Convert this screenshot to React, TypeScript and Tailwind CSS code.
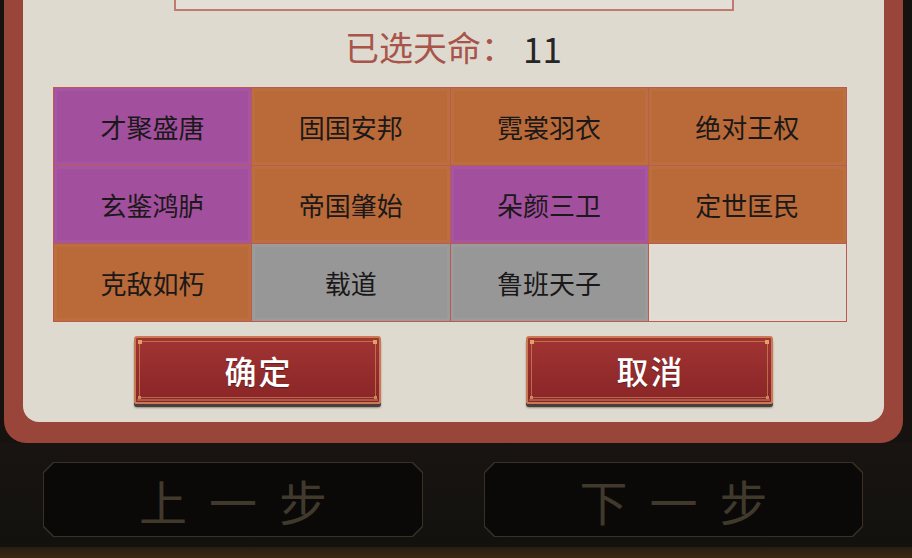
import React from "react";

type Cell = { label: string; kind: "purple" | "orange" | "gray" | "empty" };

const cells: Cell[] = [
  { label: "才聚盛唐", kind: "purple" },
  { label: "固国安邦", kind: "orange" },
  { label: "霓裳羽衣", kind: "orange" },
  { label: "绝对王权", kind: "orange" },
  { label: "玄鉴鸿胪", kind: "purple" },
  { label: "帝国肇始", kind: "orange" },
  { label: "朵颜三卫", kind: "purple" },
  { label: "定世匡民", kind: "orange" },
  { label: "克敌如朽", kind: "orange" },
  { label: "载道", kind: "gray" },
  { label: "鲁班天子", kind: "gray" },
  { label: "", kind: "empty" },
];

const kindClass: Record<Cell["kind"], string> = {
  purple: "bg-[#a24f9e]",
  orange: "bg-[#b96a38]",
  gray: "bg-[#979797]",
  empty: "bg-[#e0dcd4]",
};

function RedButton({ label }: { label: string }) {
  return (
    <div className="relative w-[247px] h-[68px] rounded-[3px] border-2 border-[#c97a55] bg-gradient-to-b from-[#a13433] to-[#8a2527] shadow-[0_3px_0_#4d3d39,0_4px_2px_rgba(0,0,0,0.35)] flex items-center justify-center">
      <div className="absolute inset-x-[3px] top-[3px] bottom-[4px] border border-[#d9975e]/60 rounded-[1px]" />
      <div className="absolute left-[2px] top-[2px] w-[4px] h-[4px] bg-[#dca460]" />
      <div className="absolute right-[2px] top-[2px] w-[4px] h-[4px] bg-[#dca460]" />
      <div className="absolute left-[2px] bottom-[3px] w-[3px] h-[3px] bg-[#c98a58]" />
      <div className="absolute right-[2px] bottom-[3px] w-[3px] h-[3px] bg-[#c98a58]" />
      <div className="absolute inset-x-[1px] bottom-[1px] h-[2px] bg-[#b0574a]" />
      <span className="relative text-white text-[32px] leading-none font-medium tracking-[2px] pl-[2px] [text-shadow:0_1px_1px_rgba(0,0,0,0.35)] font-['Noto_Sans_CJK_SC',sans-serif]">
        {label}
      </span>
    </div>
  );
}

function DarkButton({ label, width }: { label: string; width: string }) {
  return (
    <div
      className={`${width} h-[75px] bg-[#3a3026] p-[1px] [clip-path:polygon(10px_0,calc(100%-10px)_0,100%_10px,100%_calc(100%-10px),calc(100%-10px)_100%,10px_100%,0_calc(100%-10px),0_10px)]`}
    >
      <div className="w-full h-full bg-[#0a0908] flex items-center justify-center [clip-path:polygon(10px_0,calc(100%-10px)_0,100%_10px,100%_calc(100%-10px),calc(100%-10px)_100%,10px_100%,0_calc(100%-10px),0_10px)]">
        <span className="text-[#40392c] text-[48px] leading-none tracking-[22px] pl-[22px] font-['Noto_Sans_CJK_SC',sans-serif]">
          {label}
        </span>
      </div>
    </div>
  );
}

export default function App() {
  return (
    <div className="w-[912px] h-[558px] overflow-hidden bg-[#15120f] flex flex-col font-['Noto_Sans_CJK_SC',sans-serif]">
      <div className="ml-[4px] w-[899px] h-[443px] shrink-0 bg-[#9a4539] rounded-b-[22px] px-[19px] pb-[21px]">
        <div className="h-[422px] bg-[#dedad0] rounded-b-[16px] flex flex-col items-center">
          <div className="w-[560px] h-[11px] border-2 border-t-0 border-[#c07a70] bg-[#e3dfd6]" />
          <div className="mt-[16px] h-[40px] flex items-center leading-none">
            <span className="text-[#a9544a] text-[34px]">已选天命：</span>
            <span className="text-[#262626] text-[35px] ml-[8px] font-normal">11</span>
          </div>
          <div className="mt-[20px] self-start ml-[30px] w-[794px] grid grid-cols-4 grid-rows-[77px_77px_77px] gap-[1px] p-[1px] bg-[#bb5a4f]">
            {cells.map((c, i) => (
              <div
                key={i}
                className={`${kindClass[c.kind]} flex items-center justify-center shadow-[inset_0_0_0_3px_rgba(255,255,255,0.04)]`}
              >
                <span className="text-[26px] leading-none text-[#1a1818]">{c.label}</span>
              </div>
            ))}
          </div>
          <div className="mt-[14px] self-start ml-[111px] flex gap-[145px]">
            <RedButton label="确定" />
            <RedButton label="取消" />
          </div>
        </div>
      </div>
      <div className="flex-1 flex flex-col bg-gradient-to-b from-[#171411] to-[#13110e]">
        <div className="mt-[19px] ml-[43px] flex gap-[61px]">
          <DarkButton label="上一步" width="w-[380px]" />
          <DarkButton label="下一步" width="w-[379px]" />
        </div>
        <div className="mt-auto h-[11px] bg-gradient-to-b from-[#2a1d0f] to-[#3a2812]" />
      </div>
    </div>
  );
}
